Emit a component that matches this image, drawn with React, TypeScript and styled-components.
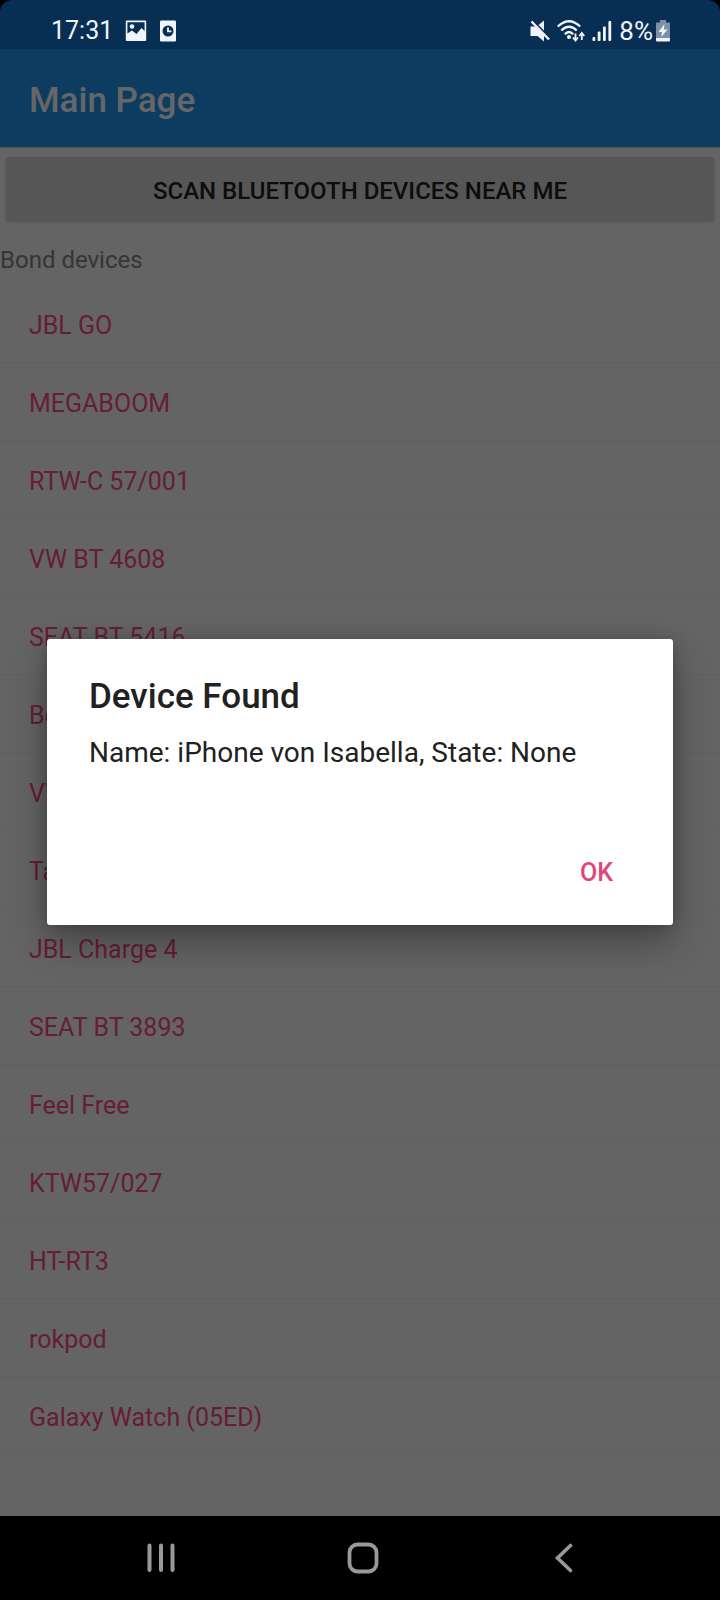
import React from "react";
import styled, { createGlobalStyle } from "styled-components";

const GlobalStyle = createGlobalStyle`
  * { box-sizing: border-box; }
  body {
    margin: 0;
    background: #000;
    font-family: Roboto, "Liberation Sans", sans-serif;
  }
  button { font-family: inherit; border: 0; padding: 0; }
`;

const Screen = styled.div`
  display: flex;
  flex-direction: column;
  min-height: 100vh;
`;

const StatusBar = styled.header`
  display: flex;
  align-items: center;
  justify-content: space-between;
  height: 49px;
  padding: 12px 49px 0 51px;
  border-radius: 12px 12px 0 0;
  background: #082e53;
  color: #f0f5fb;
`;

const StatusGroup = styled.div<{ $gap: number }>`
  display: flex;
  align-items: center;
  gap: ${(p) => p.$gap}px;
`;

const Clock = styled.span`
  font-size: 25px;
  line-height: 32px;
`;

const Percent = styled(Clock)`
  font-size: 26px;
`;

const Body = styled.div`
  position: relative;
  display: flex;
  flex-direction: column;
  flex: 1;
  background: #fafafa;
`;

const AppBar = styled.div`
  display: flex;
  align-items: center;
  height: 98px;
  padding: 4px 29px 0;
  background: #2196f3;
  box-shadow: 0 1px 2px rgba(0, 0, 0, 0.2);
`;

const PageTitle = styled.h1`
  margin: 0;
  padding-top: 2px;
  color: #fff;
  font-size: 35px;
  font-weight: 500;
  line-height: 40px;
`;

const ScanButton = styled.button`
  height: 64px;
  margin: 10px 6px;
  padding-top: 4px;
  border-radius: 3px;
  background: #d6d7d7;
  box-shadow: 0 1px 3px rgba(0, 0, 0, 0.2);
  color: #212121;
  font-size: 24px;
  font-weight: 500;
  line-height: 28px;
`;

const SectionLabel = styled.h2`
  margin: 0;
  padding: 15px 0 11px;
  color: #858585;
  font-size: 24px;
  font-weight: 400;
  line-height: 28px;
`;

const DeviceList = styled.ul`
  flex: 1;
  margin: 0;
  padding: 0 0 60px;
  list-style: none;
`;

const DeviceRow = styled.li`
  height: 78px;
  padding: 27px 29px 0;
  border-bottom: 1px solid #f0f0f0;
  color: #ff4a88;
  font-size: 25px;
  line-height: 28px;
`;

const Scrim = styled.div`
  position: absolute;
  inset: 0;
  display: flex;
  align-items: center;
  justify-content: center;
  padding: 0 47px 2px;
  background: rgba(0, 0, 0, 0.6);
`;

const Dialog = styled.section`
  display: flex;
  flex-direction: column;
  width: 100%;
  min-height: 286px;
  padding: 38px 42px 26px;
  border-radius: 3px;
  background: #fff;
  box-shadow: 0 18px 36px rgba(0, 0, 0, 0.3), 0 0 16px rgba(0, 0, 0, 0.2);
  color: #212121;
`;

const DialogTitle = styled.h2`
  margin: 0 0 20px;
  font-size: 35px;
  font-weight: 500;
  line-height: 40px;
`;

const DialogMessage = styled.p`
  margin: 0;
  font-size: 28px;
  line-height: 32px;
`;

const DialogActions = styled.div`
  display: flex;
  flex: 1;
  align-items: flex-end;
  justify-content: flex-end;
`;

const DialogButton = styled.button`
  padding: 12px 18px;
  background: transparent;
  color: #e0457b;
  font-size: 25px;
  font-weight: 500;
  line-height: 28px;
`;

const NavBar = styled.nav`
  display: flex;
  align-items: center;
  justify-content: space-between;
  height: 84px;
  padding: 0 116px 0 121px;
  background: #000;
`;

const NavButton = styled.button`
  display: flex;
  align-items: center;
  justify-content: center;
  width: 80px;
  height: 60px;
  background: transparent;
  color: #999;
`;

const devices = [
  "JBL GO",
  "MEGABOOM",
  "RTW-C 57/001",
  "VW BT 4608",
  "SEAT BT 5416",
  "Be",
  "VW",
  "Ta",
  "JBL Charge 4",
  "SEAT BT 3893",
  "Feel Free",
  "KTW57/027",
  "HT-RT3",
  "rokpod",
  "Galaxy Watch (05ED)",
];

const ImageIcon = () => (
  <svg width="22" height="22" viewBox="0 0 22 22" aria-hidden="true">
    <path
      fill="currentColor"
      fillRule="evenodd"
      d="M2 0.500h18a1.200 1.200 0 0 1 1.200 1.200v18.200a1.200 1.200 0 0 1-1.200 1.200H2a1.200 1.200 0 0 1-1.200-1.200V1.700A1.200 1.200 0 0 1 2 0.500Z M2.400 2.200V13.500L7 10.500L11.500 14L16.500 8L19.600 11V2.200Z"
    />
    <circle cx="7" cy="6.500" r="2.300" fill="currentColor" />
  </svg>
);

const ClockCardIcon = () => (
  <svg width="18" height="22" viewBox="0 0 18 22" aria-hidden="true">
    <rect x="1" y="0.500" width="16" height="21" rx="1.200" fill="currentColor" />
    <circle cx="9" cy="11" r="5.500" fill="#082e53" />
    <path d="M9 7.500V11.300H12.500" fill="none" stroke="currentColor" strokeWidth="1.800" />
  </svg>
);

const MuteIcon = () => (
  <svg width="20" height="22" viewBox="0 0 20 22" aria-hidden="true">
    <path d="M0.500 6.500H5L14 15V21.500L7.500 16H0.500Z" fill="currentColor" />
    <path d="M8.500 5L14 0.500V10.500Z" fill="currentColor" />
    <path d="M1.500 1.500L19 19.500" stroke="currentColor" strokeWidth="2.400" />
  </svg>
);

const WifiIcon = () => (
  <svg width="28" height="22" viewBox="0 0 28 22" aria-hidden="true">
    <g fill="none" stroke="currentColor" strokeWidth="2.300">
      <path d="M0.800 6.500Q12 -4 23.200 6.500" />
      <path d="M4.300 10.500Q12 3 19.700 10.500" />
      <path d="M7.800 14.200Q12 9.800 16.200 14.200" />
    </g>
    <circle cx="12" cy="17" r="2" fill="currentColor" />
    <g fill="none" stroke="currentColor" strokeWidth="1.800">
      <path d="M18.500 13.500V20M16 17.500L18.500 20.500L21 17.500" />
      <path d="M24.800 20V13.500M22.300 16L24.800 13L27.300 16" />
    </g>
  </svg>
);

const SignalIcon = () => (
  <svg width="20" height="22" viewBox="0 0 20 22" aria-hidden="true">
    <g fill="currentColor">
      <rect x="0.500" y="17" width="2.800" height="4" rx="1" />
      <rect x="5.700" y="11.500" width="2.800" height="9.500" rx="1" />
      <rect x="11" y="6.500" width="2.800" height="14.500" rx="1" />
      <rect x="16.400" y="1" width="2.800" height="20" rx="1" />
    </g>
  </svg>
);

const BatteryIcon = () => (
  <svg width="16" height="22" viewBox="0 0 16 22" aria-hidden="true">
    <path
      d="M5 0H11V2.500H14A1 1 0 0 1 15 3.500V18H1V3.500A1 1 0 0 1 2 2.500H5Z"
      fill="#7d90a8"
    />
    <path d="M1 18H15V20.500A1 1 0 0 1 14 21.500H2A1 1 0 0 1 1 20.500Z" fill="currentColor" />
    <path d="M9.500 4L3.500 12H7L6.300 17L12.500 9.500H8.800Z" fill="currentColor" />
  </svg>
);

const RecentsIcon = () => (
  <svg width="30" height="30" viewBox="0 0 30 30" aria-hidden="true">
    <path
      d="M3.500 2.500V27M15 2.500V27M26.500 2.500V27"
      stroke="currentColor"
      strokeWidth="4"
      strokeLinecap="round"
    />
  </svg>
);

const HomeIcon = () => (
  <svg width="32" height="32" viewBox="0 0 32 32" aria-hidden="true">
    <rect
      x="2.500"
      y="2.500"
      width="27"
      height="27"
      rx="8"
      fill="none"
      stroke="currentColor"
      strokeWidth="3.800"
    />
  </svg>
);

const BackIcon = () => (
  <svg width="20" height="30" viewBox="0 0 20 30" aria-hidden="true">
    <path
      d="M16.500 2.500L3.500 15L16.500 27.500"
      fill="none"
      stroke="currentColor"
      strokeWidth="3.600"
      strokeLinecap="round"
    />
  </svg>
);

export default function App() {
  return (
    <Screen>
      <GlobalStyle />
      <StatusBar>
        <StatusGroup $gap={12}>
          <Clock>17:31</Clock>
          <ImageIcon />
          <ClockCardIcon />
        </StatusGroup>
        <StatusGroup $gap={7}>
          <MuteIcon />
          <WifiIcon />
          <SignalIcon />
          <StatusGroup $gap={2}>
            <Percent>8%</Percent>
            <BatteryIcon />
          </StatusGroup>
        </StatusGroup>
      </StatusBar>
      <Body>
        <AppBar>
          <PageTitle>Main Page</PageTitle>
        </AppBar>
        <ScanButton type="button">SCAN BLUETOOTH DEVICES NEAR ME</ScanButton>
        <SectionLabel>Bond devices</SectionLabel>
        <DeviceList>
          {devices.map((name) => (
            <DeviceRow key={name}>{name}</DeviceRow>
          ))}
        </DeviceList>
        <Scrim>
          <Dialog role="dialog" aria-modal="true" aria-labelledby="dialog-title">
            <DialogTitle id="dialog-title">Device Found</DialogTitle>
            <DialogMessage>Name: iPhone von Isabella, State: None</DialogMessage>
            <DialogActions>
              <DialogButton type="button">OK</DialogButton>
            </DialogActions>
          </Dialog>
        </Scrim>
      </Body>
      <NavBar>
        <NavButton type="button" aria-label="Recent apps">
          <RecentsIcon />
        </NavButton>
        <NavButton type="button" aria-label="Home">
          <HomeIcon />
        </NavButton>
        <NavButton type="button" aria-label="Back">
          <BackIcon />
        </NavButton>
      </NavBar>
    </Screen>
  );
}
